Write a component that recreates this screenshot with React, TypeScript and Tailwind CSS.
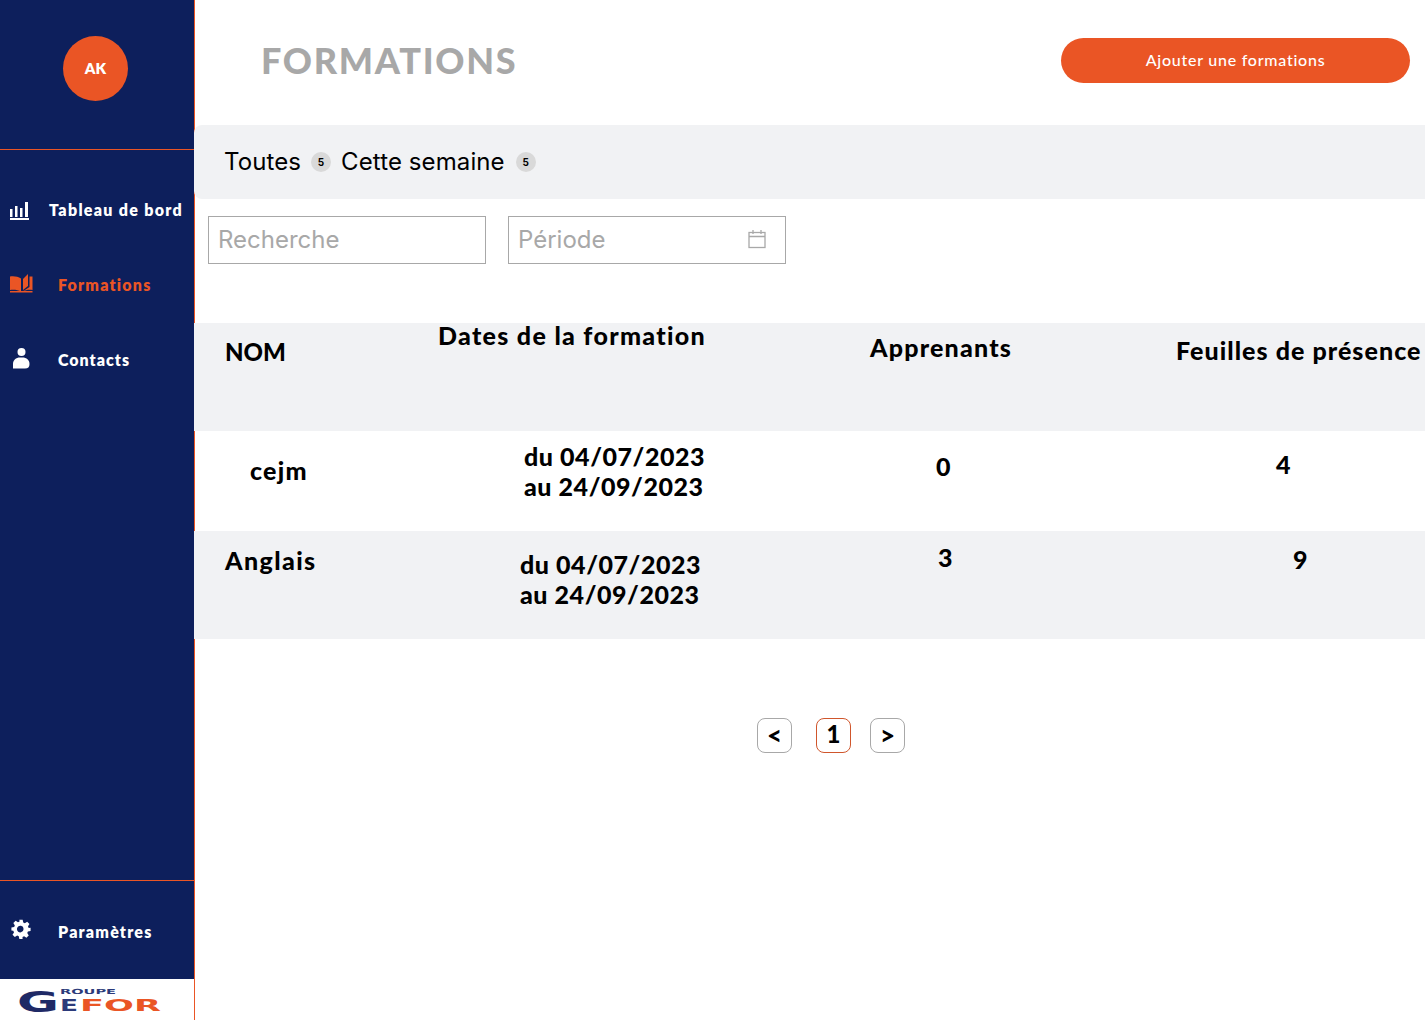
const heading = { fontFamily: '"Lato", "Noto Sans", sans-serif' };
const inter = { fontFamily: '"Inter", sans-serif' };

function ChartIcon() {
  return (
    <svg width="20" height="18" viewBox="0 0 20 18" fill="white">
      <rect x="1" y="7" width="2.5" height="8" />
      <rect x="6" y="4" width="2.500" height="11" />
      <rect x="11" y="6" width="2.500" height="9" />
      <rect x="16" y="0" width="3" height="15" />
      <rect x="1" y="16" width="19" height="2" />
    </svg>
  );
}

function BookIcon() {
  return (
    <svg width="23" height="19" viewBox="0 0 23 19" fill="#ea5525">
      <path d="M0 2.500C4 2 8 2.500 11 4.500V17.500C8 16 4 15.500 0 16Z" />
      <path d="M13 5 18 0V12L13 16Z" />
      <path d="M19.500 2.500H22.500V16C19 15.500 15.500 16 12.500 17.500L19.500 13Z" />
      <rect x="0" y="17" width="22.500" height="1.500" />
    </svg>
  );
}

function PersonIcon() {
  return (
    <svg width="18" height="21" viewBox="0 0 18 21" fill="white">
      <circle cx="9.500" cy="4" r="4" />
      <path d="M1 20.500V16C1 12 4 9.500 8 9.500H10.500C14.500 9.500 17.500 12 17.500 16C17.500 19 16 20.500 13 20.500Z" />
    </svg>
  );
}

function GearIcon() {
  return (
    <svg width="20" height="20" viewBox="0 0 24 24" fill="white">
      <path
        fillRule="evenodd"
        d="M10 1h4l.7 3.200 1.900.8 2.800-1.800 2.800 2.800-1.800 2.800.8 1.900L23.500 10.400v3.900l-3.200.7-.8 1.900 1.800 2.800-2.800 2.800-2.800-1.800-1.900.8L13.900 24H10l-.7-3.300-1.900-.8-2.800 1.800-2.800-2.800 1.800-2.800-.8-1.900L.5 13.700V10.300l3.300-.7.8-1.900-1.800-2.800 2.800-2.800 2.800 1.800 1.900-.8ZM12 8.200a4 4 0 1 0 0 7.800 4 4 0 0 0 0-7.800Z"
      />
    </svg>
  );
}

function Logo() {
  return (
    <svg width="148" height="35" viewBox="0 0 148 35" style={{ fontFamily: '"DejaVu Sans", sans-serif', fontWeight: 700 }}>
      <text x="1" y="27" fontSize="29" fill="#1f2a66" textLength="42" lengthAdjust="spacingAndGlyphs">
        G
      </text>
      <text x="44" y="9" fontSize="7" fill="#2b3a7a" textLength="56" lengthAdjust="spacingAndGlyphs">
        ROUPE
      </text>
      <text x="44" y="26" fontSize="16" fill="#2b3a7a" textLength="18" lengthAdjust="spacingAndGlyphs">
        E
      </text>
      <text x="64" y="26" fontSize="16" fill="#ea5525" textLength="81" lengthAdjust="spacingAndGlyphs">
        FOR
      </text>
    </svg>
  );
}

function CalendarIcon() {
  return (
    <svg className="-mt-0.5" width="20" height="20" viewBox="0 0 20 20" fill="none" stroke="#a8a8a8" strokeWidth="1.300">
      <rect x="2" y="3.500" width="16" height="15" />
      <path d="M2 7.500h16M6 1v4M14 1v4" />
    </svg>
  );
}

function NavItem({
  icon,
  label,
  className,
  iconClass,
}: {
  icon: React.ReactNode;
  label: string;
  className: string;
  iconClass: string;
}) {
  return (
    <div className="flex h-[75px] items-center">
      <span className={iconClass}>{icon}</span>
      <span className={className}>{label}</span>
    </div>
  );
}

function Badge() {
  return (
    <span className="flex h-5 w-5 items-center justify-center rounded-full bg-[#d9d9d9] text-[10px] font-bold text-black">
      5
    </span>
  );
}

function PageButton({ label, active }: { label: string; active?: boolean }) {
  return (
    <div
      className={`flex h-[35px] w-[35px] items-center justify-center rounded-lg border bg-white font-black text-black ${
        active ? "border-[#d0562c] pb-1 text-[24px]" : "border-[#a8a8a8] text-[26px]"
      }`}
    >
      {label}
    </div>
  );
}

export default function App() {
  return (
    <div className="flex h-[1020px] w-[1425px] overflow-hidden bg-white" style={heading}>
      <aside className="flex w-[195px] shrink-0 flex-col border-r border-[#ea5525] bg-[#0d1f5c]">
        <div className="h-[150px] shrink-0 border-b border-[#ea5525] pl-[63px] pt-9">
          <div className="flex h-[65px] w-[65px] items-center justify-center rounded-full bg-[#ea5525] text-[15px] font-extrabold text-white">
            AK
          </div>
        </div>
        <nav className="flex flex-1 flex-col pt-[23px]">
          <NavItem
            icon={<ChartIcon />}
            label="Tableau de bord"
            iconClass="ml-[9px] mr-5 flex"
            className="-mt-0.5 text-[16px] font-extrabold tracking-[1.3px] text-white"
          />
          <NavItem
            icon={<BookIcon />}
            label="Formations"
            iconClass="ml-[10px] mr-[25px] -mt-1 flex"
            className="-mt-0.5 text-[16px] font-extrabold tracking-[1.2px] text-[#ea5525]"
          />
          <NavItem
            icon={<PersonIcon />}
            label="Contacts"
            iconClass="ml-3 mr-[28px] -mt-1 flex"
            className="-mt-0.5 text-[16px] font-extrabold tracking-[1px] text-white"
          />
        </nav>
        <div className="flex h-[99px] shrink-0 items-center border-t border-[#ea5525]">
          <span className="ml-[11px] mr-[27px] -mt-0.5 flex">
            <GearIcon />
          </span>
          <span className="mt-1 text-[16px] font-extrabold tracking-[1.2px] text-white">Paramètres</span>
        </div>
        <div className="h-[41px] shrink-0 bg-white pl-4 pt-1.5">
          <Logo />
        </div>
      </aside>

      <main className="flex min-w-0 flex-1 flex-col">
        <header className="flex h-[125px] shrink-0 items-start justify-between pl-[66px] pr-[15px]">
          <h1 className="mt-[37px] text-[36px] font-black leading-[46px] tracking-[1.7px] text-[#a8a8a8]">FORMATIONS</h1>
          <button className="mt-[38px] flex h-[45px] w-[349px] items-center justify-center rounded-full bg-[#ea5525] pb-px text-[16px] font-medium tracking-[0.75px] text-white">
            Ajouter une formations
          </button>
        </header>

        <div
          className="relative -ml-px flex h-[74px] shrink-0 items-center rounded-l-lg bg-[#f1f2f4] pl-[30px] text-[24px] tracking-[0.1px] text-black"
          style={inter}
        >
          <span>Toutes</span>
          <span className="ml-[10px] mr-[10px]">
            <Badge />
          </span>
          <span>Cette semaine</span>
          <span className="ml-[11px]">
            <Badge />
          </span>
        </div>

        <div className="flex shrink-0 gap-[22px] pl-[13px] pt-[17px] text-[24px] text-[#a8a8a8]" style={inter}>
          <div className="flex h-12 w-[278px] items-center border border-[#a8a8a8] pl-[9px]">Recherche</div>
          <div className="flex h-12 w-[278px] items-center justify-between border border-[#a8a8a8] pl-[9px] pr-[18px]">
            Période
            <CalendarIcon />
          </div>
        </div>

        <section className="relative -ml-px mt-[59px] shrink-0 font-black text-black">
          <div className="grid h-[108px] grid-cols-[244px_432px_306px_1fr] bg-[#f1f2f4] text-[25px] leading-[30px] tracking-[1.2px]">
            <div className="pl-[31px] pt-[14px] text-[24px] tracking-normal">NOM</div>
            <div className="-mt-[3px] tracking-[1.3px]">Dates de la formation</div>
            <div className="pt-[9px]">Apprenants</div>
            <div className="whitespace-nowrap pt-[12px] tracking-[1.05px]">Feuilles de présence</div>
          </div>
          <div className="grid h-[100px] grid-cols-[244px_432px_306px_1fr] text-[25px] leading-[30px]">
            <div className="pl-[56px] pt-[24px] tracking-[1.2px]">cejm</div>
            <div className="pl-[86px] pt-[10px] tracking-[0.55px]">
              du 04/07/2023
              <br />
              au 24/09/2023
            </div>
            <div className="pl-[66px] pt-[20px]">0</div>
            <div className="pl-[100px] pt-[18px]">4</div>
          </div>
          <div className="grid h-[108px] grid-cols-[244px_432px_306px_1fr] bg-[#f1f2f4] text-[25px] leading-[30px]">
            <div className="pl-[31px] pt-[14px] tracking-[1.4px]">Anglais</div>
            <div className="pl-[82px] pt-[18px] tracking-[0.55px]">
              du 04/07/2023
              <br />
              au 24/09/2023
            </div>
            <div className="pl-[68px] pt-[11px]">3</div>
            <div className="pl-[117px] pt-[13px]">9</div>
          </div>
        </section>

        <div className="mt-[79px] flex items-center pl-[562px]">
          <PageButton label="<" />
          <span className="ml-6">
            <PageButton label="1" active />
          </span>
          <span className="ml-[19px]">
            <PageButton label=">" />
          </span>
        </div>
      </main>
    </div>
  );
}
